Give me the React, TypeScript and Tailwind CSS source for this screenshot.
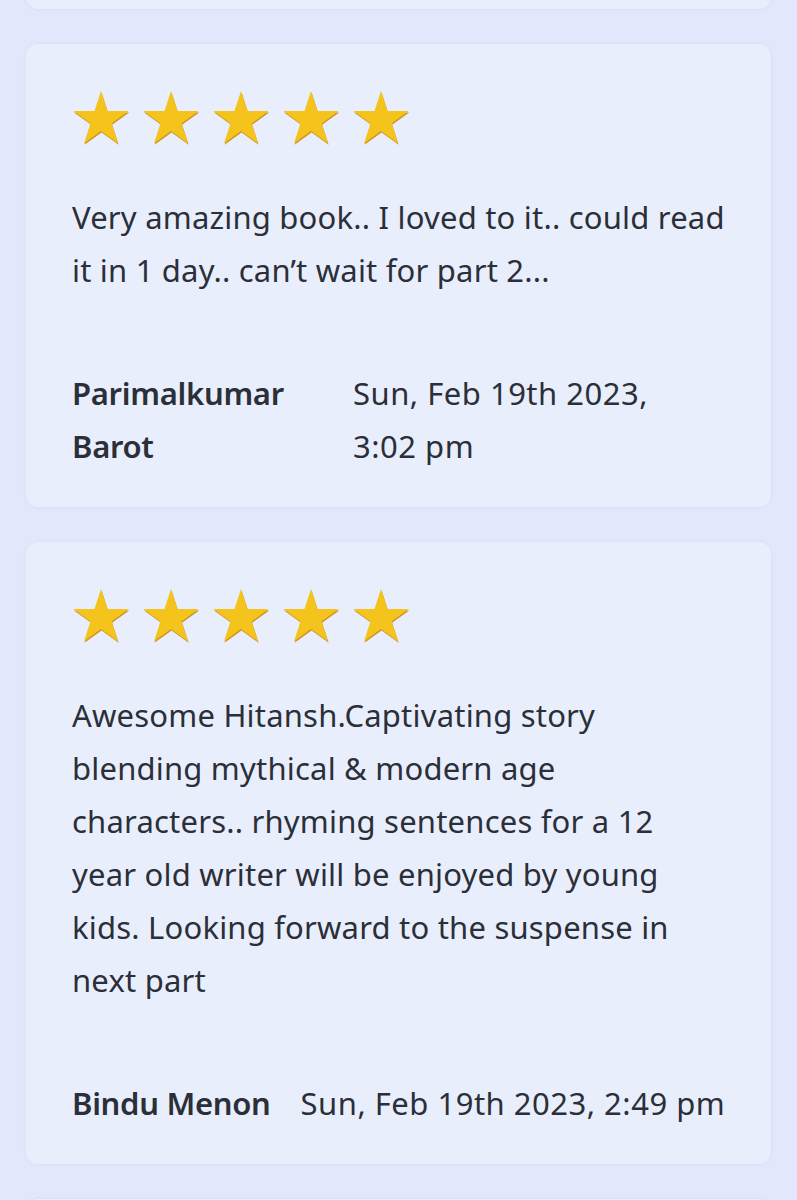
import React from "react";

type Review = {
  lines: string[];
  name: string[];
  nameClass: string;
  date: string[];
};

const reviews: Review[] = [
  {
    lines: ["Very amazing book.. I loved to it.. could read", "it in 1 day.. can’t wait for part 2..."],
    name: ["Parimalkumar", "Barot"],
    nameClass: "w-[251px]",
    date: ["Sun, Feb 19th 2023,", "3:02 pm"],
  },
  {
    lines: [
      "Awesome Hitansh.Captivating story",
      "blending mythical & modern age",
      "characters.. rhyming sentences for a 12",
      "year old writer will be enjoyed by young",
      "kids. Looking forward to the suspense in",
      "next part",
    ],
    name: ["Bindu Menon"],
    nameClass: "",
    date: ["Sun, Feb 19th 2023, 2:49 pm"],
  },
];

const STAR_POINTS =
  "29,1 35.52,21.02 56.58,21.04 39.56,33.43 46.05,53.46 29,41.1 11.95,53.46 18.44,33.43 1.42,21.04 22.48,21.02";

function Star() {
  return (
    <svg width="58" height="57" viewBox="0 0 58 57" className="block shrink-0">
      {/* darker rim that peeks out below the fill */}
      <polygon points={STAR_POINTS} fill="#cf951f" transform="translate(0.6 1.4)" />
      <polygon points={STAR_POINTS} fill="#f4c31c" />
    </svg>
  );
}

function ReviewCard({ review }: { review: Review }) {
  return (
    <div className="mx-[26px] rounded-[12px] bg-[#e9eefd] px-[46px] pt-[46px] pb-[34px] shadow-[0_0_3px_rgba(120,130,190,0.12)]">
      <div className="flex gap-[12px]">
        {[0, 1, 2, 3, 4].map((i) => (
          <Star key={i} />
        ))}
      </div>
      <p className="mt-[44px] text-[31px] leading-[53px] tracking-[0.2px] whitespace-nowrap text-[#2b2f38]">
        {review.lines.map((l, i) => (
          <span key={i} className="block">
            {l}
          </span>
        ))}
      </p>
      <div className="mt-[70px] flex gap-[30px] text-[31px] leading-[53px] whitespace-nowrap text-[#2b2f38]">
        <div className={`shrink-0 font-semibold tracking-[-0.3px] ${review.nameClass}`}>
          {review.name.map((l, i) => (
            <span key={i} className="block">
              {l}
            </span>
          ))}
        </div>
        <div className="tracking-[0.5px]">
          {review.date.map((l, i) => (
            <span key={i} className="block">
              {l}
            </span>
          ))}
        </div>
      </div>
    </div>
  );
}

export default function App() {
  return (
    <div
      className="h-[1200px] overflow-hidden bg-[#e2e7fb]"
      style={{ fontFamily: '"Noto Sans", "Open Sans", sans-serif' }}
    >
      <div className="mt-[-91px] flex flex-col gap-[35px]">
        <div className="mx-[26px] h-[100px] rounded-[12px] bg-[#e9eefd] shadow-[0_0_3px_rgba(120,130,190,0.12)]" />
        {reviews.map((r) => (
          <ReviewCard key={r.name.join(" ")} review={r} />
        ))}
        <div className="mx-[26px] h-[100px] rounded-[12px] bg-[#e9eefd] shadow-[0_0_3px_rgba(120,130,190,0.12)]" />
      </div>
    </div>
  );
}
